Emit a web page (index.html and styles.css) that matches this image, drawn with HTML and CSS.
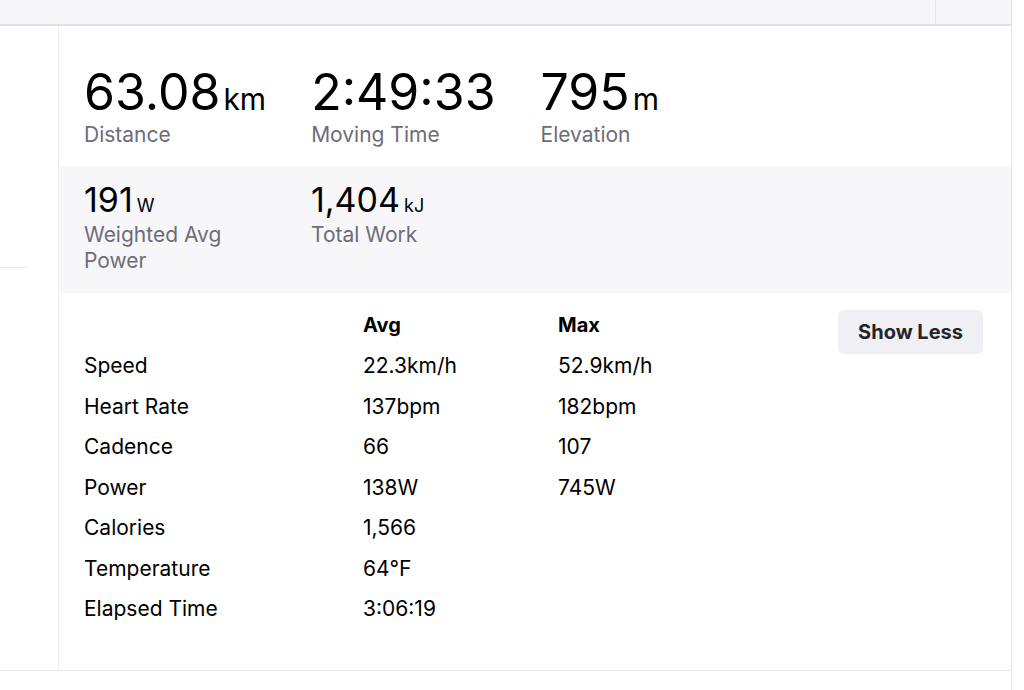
FILE: index.html
```html
<!DOCTYPE html>
<html lang="en">
<head>
  <meta charset="UTF-8">
  <meta name="viewport" content="width=device-width, initial-scale=1.0">
  <title>Activity stats</title>
  <link rel="stylesheet" href="styles.css">
</head>
<body>
  <div class="page">
    <!-- Верхняя полоса -->
    <div class="top-bar">
      <div class="top-bar-end"></div>
    </div>

    <div class="activity">
      <div class="side-col">
        <div class="side-divider"></div>
      </div>

      <div class="stats-panel">
        <!-- Основные показатели -->
        <ul class="primary-stats">
          <li>
            <div class="stat-value">63.08<span class="unit">km</span></div>
            <div class="stat-label">Distance</div>
          </li>
          <li>
            <div class="stat-value">2:49:33</div>
            <div class="stat-label">Moving Time</div>
          </li>
          <li>
            <div class="stat-value">795<span class="unit">m</span></div>
            <div class="stat-label">Elevation</div>
          </li>
        </ul>

        <ul class="secondary-stats">
          <li>
            <div class="stat-value">191<span class="unit">W</span></div>
            <div class="stat-label">Weighted Avg Power</div>
          </li>
          <li>
            <div class="stat-value">1,404<span class="unit">kJ</span></div>
            <div class="stat-label">Total Work</div>
          </li>
        </ul>

        <!-- Подробная таблица -->
        <div class="more-stats">
          <table class="stats-table">
            <thead>
              <tr><th></th><th>Avg</th><th>Max</th></tr>
            </thead>
            <tbody>
              <tr><td>Speed</td><td>22.3km/h</td><td>52.9km/h</td></tr>
              <tr><td>Heart Rate</td><td>137bpm</td><td>182bpm</td></tr>
              <tr><td>Cadence</td><td>66</td><td>107</td></tr>
              <tr><td>Power</td><td>138W</td><td>745W</td></tr>
              <tr><td>Calories</td><td>1,566</td><td></td></tr>
              <tr><td>Temperature</td><td>64℉</td><td></td></tr>
              <tr><td>Elapsed Time</td><td>3:06:19</td><td></td></tr>
            </tbody>
          </table>
          <button class="toggle-button">Show Less</button>
        </div>
      </div>
    </div>
  </div>
</body>
</html>
```

FILE: styles.css
```css
body {
  margin: 0;
  font-family: Inter, "Noto Sans", sans-serif;
  color: #000;
  background: #fff;
}
.page {
  width: 1011px;
  min-height: 690px;
  border-right: 1px solid #e6e6eb;
}
.top-bar {
  height: 24px;
  background: #f7f7fa;
  border-bottom: 2px solid #e0e0e8;
  display: flex;
  justify-content: flex-end;
}
.top-bar-end {
  width: 75px;
  border-left: 1px solid #e6e6ee;
}
.activity {
  display: flex;
  border-bottom: 1px solid #e6e6eb;
}
.side-col {
  width: 58px;
  padding-top: 241px;
}
.side-divider {
  width: 28px;
  border-top: 1px solid #e8e8ee;
}
.stats-panel {
  flex: 1;
  border-left: 1px solid #ededf2;
  height: 644px;
}
ul {
  list-style: none;
  margin: 0;
}
.unit {
  line-height: 1;
}
.primary-stats {
  display: flex;
  gap: 45px;
  padding: 38px 25px 18px 25px;
}
.primary-stats .stat-value {
  font-size: 50px;
  line-height: 56px;
}
.primary-stats .unit {
  font-size: 30px;
  margin-left: 3px;
}
.stat-label {
  font-size: 21px;
  line-height: 26px;
  color: #6d6d78;
}
.primary-stats .stat-label {
  margin-top: 2px;
}
.secondary-stats {
  display: flex;
  background: #f7f7fa;
  padding: 14px 25px 19px 25px;
}
.secondary-stats li {
  width: 180px;
  margin-right: 47px;
}
.secondary-stats .stat-value {
  font-size: 34px;
  line-height: 40px;
}
.secondary-stats .unit {
  font-size: 18px;
  margin-left: 4px;
}
.secondary-stats .stat-label {
  margin-top: 2px;
}
.more-stats {
  display: flex;
  align-items: flex-start;
  padding: 12px 28px 0 25px;
}
.stats-table {
  flex: 1;
  border-collapse: collapse;
  font-size: 21px;
}
.stats-table th,
.stats-table td {
  height: 40.5px;
  padding: 0;
  text-align: left;
  vertical-align: middle;
}
.stats-table th {
  font-weight: 700;
  font-size: 20px;
}
.stats-table td:first-child {
  width: 279px;
}
.stats-table td:nth-child(2) {
  width: 195px;
}
.toggle-button {
  margin-top: 5px;
  background: #efeff4;
  border: none;
  border-radius: 6px;
  padding: 10px 20px;
  font-family: inherit;
  font-size: 20px;
  line-height: 24px;
  font-weight: 700;
  color: #242428;
}
```
